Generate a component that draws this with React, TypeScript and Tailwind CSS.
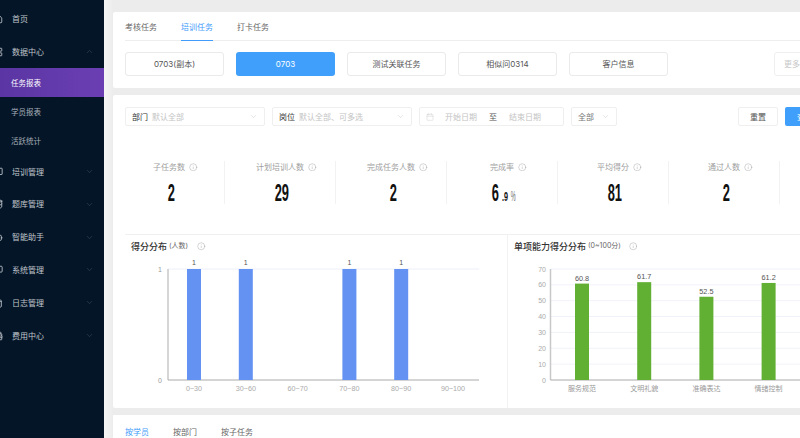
import { ChevronDown, ChevronUp, Info, Calendar, Home, LayoutGrid, BookOpen, Database, Bot, Monitor, FileText, Wallet } from 'lucide-react';

const FONT = 'Inter, "Noto Sans CJK SC", "Liberation Sans", sans-serif';
const NUM_FONT = '"Liberation Sans", "Noto Sans CJK SC", sans-serif';

const menu = [
  { label: '培训管理', icon: BookOpen },
  { label: '题库管理', icon: Database },
  { label: '智能助手', icon: Bot },
  { label: '系统管理', icon: Monitor },
  { label: '日志管理', icon: FileText },
  { label: '费用中心', icon: Wallet },
];

const tasks = ['0703(副本)', '0703', '测试关联任务', '相似问0314', '客户信息'];

const stats = [
  { label: '子任务数', value: '2' },
  { label: '计划培训人数', value: '29' },
  { label: '完成任务人数', value: '2' },
  { label: '完成率', value: '6', rate: true },
  { label: '平均得分', value: '81' },
  { label: '通过人数', value: '2' },
];

function SideRow({ label, icon: Icon, open }: { label: string; icon: typeof Home; open?: boolean }) {
  return (
    <div className="h-[32.8px] flex items-center text-[8px] text-[#c0c5cc]">
      <Icon size={10} className="-ml-[7px] mr-[9px] text-[#c8ccd2] shrink-0" />
      <span className="flex-1">{label}</span>
      {open === undefined ? null : open ? (
        <ChevronUp size={9} strokeWidth={1} className="mr-[10px] text-[#5d6874]" />
      ) : (
        <ChevronDown size={9} strokeWidth={1} className="mr-[10px] text-[#5d6874]" />
      )}
    </div>
  );
}

function Sidebar() {
  return (
    <aside className="w-[104px] shrink-0 bg-[#031527] pt-[2.6px] overflow-hidden">
      <SideRow label="首页" icon={Home} />
      <SideRow label="数据中心" icon={LayoutGrid} open />
      <div className="h-[29px] flex items-center pl-[11px] pt-[1px] text-[7.5px] text-white bg-gradient-to-r from-[#5a35a3] to-[#6b3fb3]">任务报表</div>
      <div className="h-[29px] flex items-center pl-[11px] pt-[1px] text-[7.5px] text-[#aab1ba]">学员报表</div>
      <div className="h-[29px] flex items-center pl-[11px] pt-[1px] text-[7.5px] text-[#aab1ba]">活跃统计</div>
      {menu.map((m) => (
        <SideRow key={m.label} label={m.label} icon={m.icon} open={false} />
      ))}
    </aside>
  );
}

function Select({ label, placeholder, width }: { label?: string; placeholder: string; width: string }) {
  return (
    <div className={`${width} h-[19px] shrink-0 flex items-center px-[6px] border border-[#efefef] rounded-[2px] text-[8px]`}>
      {label && <span className="text-[#333] mr-[4px]">{label}</span>}
      <span className={label ? 'flex-1 text-[#c4c4c4]' : 'flex-1 text-[#777]'}>{placeholder}</span>
      <ChevronDown size={9} strokeWidth={1} className="text-[#bbb]" />
    </div>
  );
}

function Stat({ label, value, rate }: { label: string; value: string; rate?: boolean }) {
  return (
    <div className="w-[111px] h-[43px] shrink-0 flex flex-col items-center border-r border-[#f2f2f2]">
      <div className="relative flex items-center shrink-0 h-[12px] text-[8px] text-[#a0a0a0]">
        {label}
        <Info size={8.5} strokeWidth={1} className="absolute left-full ml-[4px] text-[#8a8a8a]" />
      </div>
      <div className="mt-[7px] ml-[4px] h-[26px] shrink-0 flex items-baseline justify-center text-[#111] font-bold" style={{ fontFamily: NUM_FONT }}>
        <span className="inline-block scale-x-[0.56] text-[23px] leading-[26px]">{value}</span>
        {rate && (
          <>
            <span className="-ml-[2px] inline-block scale-x-[0.6] text-[12px] leading-[26px]">.9</span>
            <span className="-ml-[3px] inline-block scale-x-[0.4] text-[14px] leading-[26px] font-normal text-[#777]">%</span>
          </>
        )}
      </div>
    </div>
  );
}

function ChartTitle({ title, unit, gap }: { title: string; unit: string; gap: string }) {
  return (
    <div className="h-[23px] flex items-center pl-[6px] text-[9px] font-medium text-[#333]">
      {title}
      <span className="ml-[2px] text-[7px] font-normal text-[#666]">{unit}</span>
      <Info size={8.5} strokeWidth={1} className={`${gap} text-[#8a8a8a]`} />
    </div>
  );
}

function ScoreChart() {
  const cols = ['0~30', '30~60', '60~70', '70~80', '80~90', '90~100'];
  const vals = [1, 1, 0, 1, 1, 0];
  return (
    <svg width="382" height="150" className="block" fontFamily={NUM_FONT}>
      <line x1="43" y1="11" x2="354" y2="11" stroke="#eef0fa" strokeWidth="1" />
      <line x1="43" y1="11" x2="43" y2="122" stroke="#c8c8c8" strokeWidth="1.5" />
      <line x1="43" y1="122" x2="354" y2="122" stroke="#aaaaaa" strokeWidth="1" />
      <text x="37" y="13.5" fontSize="7" fill="#999" textAnchor="end">1</text>
      <text x="37" y="124.5" fontSize="7" fill="#999" textAnchor="end">0</text>
      {cols.map((c, i) => {
        const cx = 69 + i * 51.8;
        return (
          <g key={c}>
            {vals[i] > 0 && <rect x={cx - 7} y="11" width="14" height="111" fill="#6392f2" />}
            {vals[i] > 0 && <text x={cx} y="7" fontSize="7" fill="#555" textAnchor="middle">1</text>}
            <text x={cx} y="132.5" fontSize="7.2" fill="#aaa" textAnchor="middle">{c}</text>
          </g>
        );
      })}
    </svg>
  );
}

function SkillChart() {
  const items = [
    { name: '服务规范', v: 60.8 },
    { name: '文明礼貌', v: 61.7 },
    { name: '准确表达', v: 52.5 },
    { name: '情绪控制', v: 61.2 },
  ];
  const y0 = 122;
  const step = 111 / 70;
  return (
    <svg width="292" height="150" className="block" fontFamily={NUM_FONT}>
      {[70, 60, 50, 40, 30, 20, 10, 0].map((t) => {
        const y = y0 - t * step;
        return (
          <g key={t}>
            {t > 0 && <line x1="43" y1={y} x2="292" y2={y} stroke="#f1f2f9" strokeWidth="1" />}
            <text x="38" y={y + 2.5} fontSize="7" fill="#aaa" textAnchor="end">{t}</text>
          </g>
        );
      })}
      <line x1="42.5" y1="11" x2="42.5" y2="122" stroke="#c8c8c8" strokeWidth="1.5" />
      <line x1="42.5" y1="122" x2="292" y2="122" stroke="#aaaaaa" strokeWidth="1" />
      {items.map((it, i) => {
        const cx = 74 + i * 62.2;
        const y = y0 - it.v * step;
        return (
          <g key={it.name}>
            <rect x={cx - 7} y={y} width="14" height={y0 - y} fill="#62b033" />
            <text x={cx} y={y - 3} fontSize="7.3" fill="#555" textAnchor="middle">{it.v}</text>
            <text x={cx} y="132.5" fontSize="7" fill="#999" textAnchor="middle">{it.name}</text>
          </g>
        );
      })}
    </svg>
  );
}

export default function App() {
  return (
    <div className="w-[800px] h-[438px] flex overflow-hidden bg-[#ececec]" style={{ fontFamily: FONT }}>
      <Sidebar />
      <main className="flex-1 min-w-0 overflow-hidden pt-[12px] pl-[9px] flex flex-col gap-[7px] bg-gradient-to-r from-[#f6f6f6] to-[#ececec] bg-[length:9px_100%] bg-no-repeat">
        <section className="w-[760px] h-[76px] shrink-0 bg-white rounded-l-[2px] px-[12px]">
          <div className="h-[29px] flex gap-[24px] border-b border-[#eeeeee] text-[8px] text-[#666] w-[700px]">
            <span className="h-[29px] pt-[10px] leading-[11px]">考核任务</span>
            <span className="h-[29px] pt-[10px] leading-[11px] text-[#3f9cfb] border-b border-[#3f9cfb]">培训任务</span>
            <span className="h-[29px] pt-[10px] leading-[11px]">打卡任务</span>
          </div>
          <div className="mt-[11px] flex gap-[12px]">
            {tasks.map((t) => (
              <div
                key={t}
                className={
                  t === '0703'
                    ? 'w-[99px] h-[24px] flex items-center justify-center rounded-[3px] bg-[#409ffb] text-white text-[8px]'
                    : 'w-[99px] h-[24px] flex items-center justify-center rounded-[3px] border border-[#eaeaea] text-[#555] text-[8px]'
                }
              >
                {t}
              </div>
            ))}
            <div className="ml-[94px] w-[40px] h-[24px] flex items-center pl-[9px] rounded-[3px] border border-[#efefef] text-[#c8c8c8] text-[8px]">更多</div>
          </div>
        </section>

        <section className="w-[760px] h-[313px] shrink-0 bg-white rounded-l-[2px]">
          <div className="pt-[12px] pl-[12px] flex">
            <div className="flex gap-[7px]">
              <Select label="部门" placeholder="默认全部" width="w-[140px]" />
              <Select label="岗位" placeholder="默认全部、可多选" width="w-[140px]" />
              <div className="w-[145px] h-[19px] shrink-0 flex items-center px-[6px] border border-[#efefef] rounded-[2px] text-[8px] text-[#c4c4c4]">
                <Calendar size={8} strokeWidth={1} className="mr-[11px] text-[#bbb]" />
                <span>开始日期</span>
                <span className="mx-[12px] text-[#555]">至</span>
                <span>结束日期</span>
              </div>
              <Select placeholder="全部" width="w-[46px]" />
            </div>
            <div className="ml-[121px] flex gap-[7px]">
              <div className="w-[40px] h-[19px] flex items-center justify-center border border-[#efefef] rounded-[2px] text-[8px] text-[#555]">重置</div>
              <div className="w-[40px] h-[19px] flex items-center justify-center rounded-[2px] bg-[#409ffb] text-[8px] text-white">查询</div>
            </div>
          </div>

          <div className="mt-[35px] ml-[1px] flex">
            {stats.map((s) => (
              <Stat key={s.label} {...s} />
            ))}
          </div>

          <div className="mt-[30px] ml-[12px] flex border-t border-[#f0f0f0] h-[174px]">
            <div className="w-[383px] shrink-0 border-r border-[#f2f2f2]">
              <ChartTitle title="得分分布" unit="(人数)" gap="ml-[9px]" />
              <ScoreChart />
            </div>
            <div className="flex-1">
              <ChartTitle title="单项能力得分分布" unit="(0~100分)" gap="ml-[8px]" />
              <SkillChart />
            </div>
          </div>
        </section>

        <section className="w-[760px] flex-1 bg-white px-[12px] pt-[11px] flex gap-[24px] text-[8px] text-[#666]">
          <span className="text-[#3f9cfb]">按学员</span>
          <span>按部门</span>
          <span>按子任务</span>
        </section>
      </main>
    </div>
  );
}
